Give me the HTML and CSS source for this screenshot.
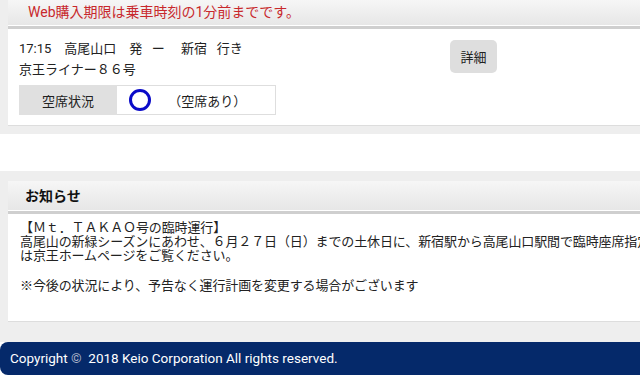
FILE: index.html
```html
<!DOCTYPE html>
<html>
<head>
  <title>予約確認</title>
  <link rel="stylesheet" href="styles.css">
</head>
<body>
  <div class="page">

    <div class="section top">
      <div class="card">
        <div class="card-head notice-red">Web購入期限は乗車時刻の1分前までです。</div>
        <div class="train">
          <div class="train-info">
            <div class="line">17:15&nbsp;&nbsp;&nbsp;&nbsp;高尾山口&nbsp;&nbsp;&nbsp;&nbsp;発&nbsp;&nbsp;&nbsp;ー&nbsp;&nbsp;&nbsp;&nbsp;&nbsp;新宿&nbsp;&nbsp;&nbsp;行き</div>
            <div class="line">京王ライナー８６号</div>
            <table class="seats">
              <tr>
                <th>空席状況</th>
                <td>
                  <span class="ring"></span>
                  <span class="seat-text">（空席あり）</span>
                </td>
              </tr>
            </table>
          </div>
          <button class="detail">詳細</button>
        </div>
      </div>
    </div>

    <div class="spacer"></div>

    <div class="section news">
      <div class="card">
        <div class="card-head title">お知らせ</div>
        <div class="news-body">
          <p>【Ｍｔ．ＴＡＫＡＯ号の臨時運行】<br>
          高尾山の新緑シーズンにあわせ、６月２７日（日）までの土休日に、新宿駅から高尾山口駅間で臨時座席指定列車「Ｍｔ．ＴＡＫＡＯ号」を運転します。詳しく<br>
          は京王ホームページをご覧ください。</p>
          <p class="note">※今後の状況により、予告なく運行計画を変更する場合がございます</p>
        </div>
      </div>
    </div>

    <div class="footer">Copyright <span class="copy">©</span>&nbsp; 2018 Keio Corporation All rights reserved.</div>

  </div>
</body>
</html>
```

FILE: styles.css
```css
body {
  margin: 0;
  background: #fff;
  overflow: hidden;
  font-family: Roboto, "Noto Sans CJK JP", sans-serif;
  font-size: 13px;
  color: #222;
}
.page { width: 1000px; }

.section { background: #eee; padding-left: 8px; }
.section.top { padding-bottom: 8px; }
.section.news { padding-top: 10px; padding-bottom: 20px; }
.spacer { height: 37px; }

.card { background: #fff; border-bottom: 1px solid #ddd; }
.card-head {
  background: linear-gradient(#f6f6f6, #e6e6e6);
  border-bottom: 3px solid #cfcfcf;
  box-shadow: inset 0 -1px 0 #fff;
}
.notice-red {
  height: 26px;
  line-height: 24px;
  padding-left: 20px;
  font-size: 14px;
  color: #c8282c;
}
.title {
  height: 30px;
  line-height: 30px;
  padding-left: 17px;
  font-size: 14px;
  font-weight: bold;
  color: #111;
}

.train {
  display: flex;
  align-items: flex-start;
  padding: 9px 0 10px 11px;
}
.train-info { flex: 0 0 431px; }
.line { height: 21px; line-height: 21px; white-space: nowrap; }

.seats {
  border-collapse: collapse;
  margin-top: 5px;
  width: 257px;
}
.seats th {
  width: 96px;
  height: 28px;
  padding: 0;
  background: #e0e0e0;
  border: 1px solid #e0e0e0;
  font-weight: normal;
  text-align: center;
}
.seats td {
  padding: 0 0 0 12px;
  border: 1px solid #dedede;
  white-space: nowrap;
}
.ring {
  display: inline-block;
  width: 16px;
  height: 16px;
  border: 3.5px solid #0a0ac8;
  border-radius: 50%;
  vertical-align: middle;
}
.seat-text { margin-left: 14px; vertical-align: middle; }

.detail {
  margin-top: 2px;
  width: 47px;
  height: 33px;
  border: none;
  border-radius: 5px;
  background: #dedede;
  font-family: inherit;
  font-size: 13px;
  color: #222;
  padding: 0;
}

.news-body { padding: 7px 12px 28px 12px; }
.news-body p {
  margin: 0;
  line-height: 14px;
  letter-spacing: -0.12px;
  white-space: nowrap;
}
.news-body .note { margin-top: 16px; }

.footer {
  background: #05296a;
  color: #fff;
  height: 33px;
  line-height: 33px;
  padding-left: 10px;
  border-radius: 8px 0 0 8px;
  font-size: 13.5px;
}
.copy { color: #aab4c8; }
```
